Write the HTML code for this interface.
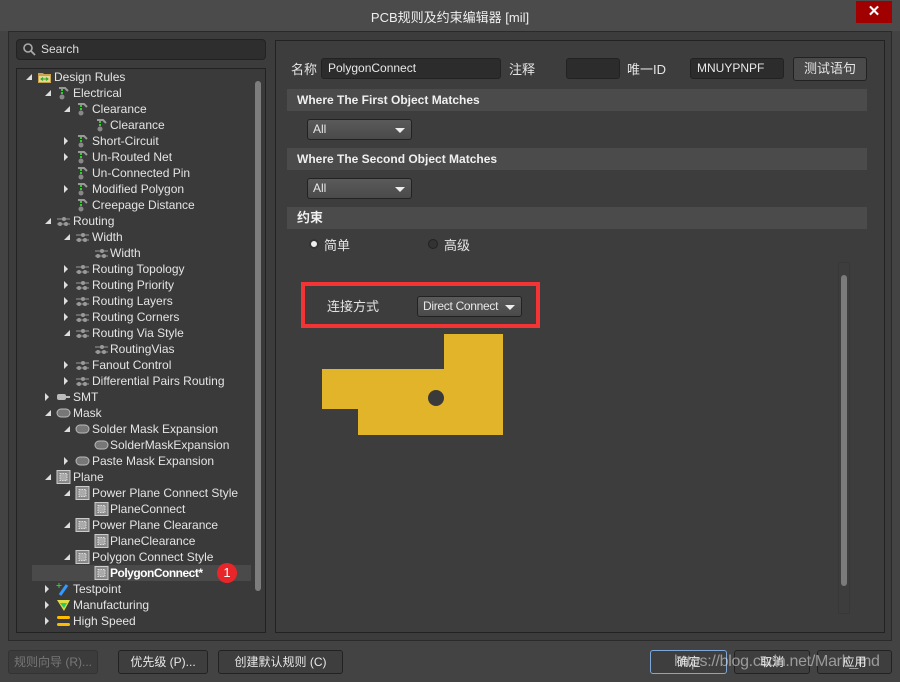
<!DOCTYPE html>
<html><head><meta charset="utf-8">
<style>
*{box-sizing:border-box;margin:0;padding:0}
body{width:900px;height:682px;background:#434343;font-family:"Liberation Sans","Noto Sans CJK SC",sans-serif;font-size:12px;color:#e4e4e4;position:relative;overflow:hidden}
.a{position:absolute}
.row{position:absolute;height:16px;line-height:16px;white-space:nowrap}
.row span{position:absolute;left:0;top:0}
.ic{position:absolute;top:1px;width:15px;height:14px}
.exp{position:absolute;top:5px;width:0;height:0;border-left:6px solid transparent;border-bottom:6px solid #ddd}
.col{position:absolute;top:4px;width:0;height:0;border-top:4px solid transparent;border-bottom:4px solid transparent;border-left:4px solid #ddd}
.inp{position:absolute;background:#2c2c2c;border:1px solid #222;border-radius:3px;height:21px;line-height:19px;padding-left:6px;color:#e8e8e8}
.band{position:absolute;left:287px;width:580px;height:22px;background:#4b4b4b;line-height:22px;padding-left:10px;font-weight:bold;color:#f0f0f0}
.dd{position:absolute;background:linear-gradient(#5a5a5a,#4a4a4a);border:1px solid #222;border-radius:3px;height:21px;line-height:19px;padding-left:5px;color:#e8e8e8}
.dd:after{content:"";position:absolute;right:6px;top:8px;border-left:5px solid transparent;border-right:5px solid transparent;border-top:5px solid #eee}
.btn{position:absolute;top:650px;height:24px;border:1px solid #222;border-radius:3px;background:#3e3e3e;line-height:22px;text-align:center;color:#e8e8e8;font-size:12px}
</style></head><body>
<div class="a" style="left:0;top:0;width:900px;height:31px;background:#4b4b4b"></div>
<div class="a" style="left:0;top:7px;width:900px;text-align:center;font-size:13px;color:#eee">PCB规则及约束编辑器 [mil]</div>
<div class="a" style="left:856px;top:1px;width:36px;height:22px;background:#a00000;color:#fff;text-align:center;font-weight:bold;font-size:15px;line-height:22px">✕</div>
<div class="a" style="left:8px;top:31px;width:884px;height:610px;background:#3c3c3c;border:1px solid #2a2a2a"></div>
<div class="a" style="left:16px;top:39px;width:250px;height:21px;background:#2e2e2e;border:1px solid #222;border-radius:4px"></div>
<svg class="a" style="left:22px;top:42px" width="14" height="14"><circle cx="6" cy="6" r="4" stroke="#aaa" stroke-width="1.6" fill="none"/><line x1="9" y1="9" x2="13" y2="13" stroke="#aaa" stroke-width="1.8"/></svg>
<div class="a" style="left:41px;top:42px;color:#ddd">Search</div>
<div class="a" style="left:16px;top:68px;width:250px;height:565px;background:#3a3a3a;border:1px solid #222"></div>
<div class="a" style="left:255px;top:81px;width:6px;height:510px;background:#7d7d7d;border-radius:3px"></div>
<div class="a" style="left:32px;top:565px;width:219px;height:16px;background:#4a4a4a"></div>

<svg width="0" height="0" style="position:absolute">
<defs>
<symbol id="el" viewBox="0 0 15 14"><path d="M3 2 H9 L12 5" stroke="#999" stroke-width="2" fill="none"/><circle cx="6" cy="11" r="2.5" fill="#888"/><rect x="5" y="3" width="2" height="2" fill="#3c3"/><rect x="5" y="6" width="2" height="2" fill="#3c3"/></symbol>
<symbol id="rt" viewBox="0 0 15 14"><line x1="1" y1="5" x2="14" y2="5" stroke="#999"/><line x1="1" y1="10" x2="14" y2="10" stroke="#999"/><circle cx="8" cy="5" r="2" fill="#999"/><circle cx="4" cy="10" r="2" fill="#999"/><circle cx="10" cy="10" r="2" fill="#999"/></symbol>
<symbol id="mk" viewBox="0 0 15 14"><rect x="1" y="3" width="13" height="8" rx="4" fill="#777" stroke="#bbb"/></symbol>
<symbol id="pl" viewBox="0 0 15 14"><rect x="1" y="0.5" width="13" height="13" fill="#888" stroke="#ccc"/><rect x="4" y="3.5" width="7" height="7" fill="#aaa" stroke="#ddd" stroke-dasharray="1.5 1"/></symbol>
<symbol id="dr" viewBox="0 0 15 14"><path d="M1 3 H6 L7 4 H14 V13 H1Z" fill="#c8a54a"/><rect x="2" y="6" width="11" height="6" fill="#e8d79a"/><path d="M4 9 H11 M6 7.5 L4 9 L6 10.5 M9 7.5 L11 9 L9 10.5" stroke="#2a2" fill="none"/></symbol>
<symbol id="smt" viewBox="0 0 15 14"><rect x="1" y="4" width="9" height="6" rx="2" fill="#bbb"/><path d="M10 7 H14" stroke="#bbb" stroke-width="2"/></symbol>
<symbol id="tp" viewBox="0 0 15 14"><path d="M4 13 L11 3" stroke="#39f" stroke-width="3"/><path d="M3 1 V6 M0.5 3.5 H5.5" stroke="#3c3"/></symbol>
<symbol id="mf" viewBox="0 0 15 14"><path d="M1 2 H14 L8 13 Z" fill="#dd4"/><path d="M4 5 H11 L8 10Z" fill="#2c6"/></symbol>
<symbol id="hs" viewBox="0 0 15 14"><rect x="1" y="2" width="13" height="3" rx="1.5" fill="#fb0"/><rect x="1" y="9" width="13" height="3" rx="1.5" fill="#fb0"/></symbol>
</defs></svg>

<div class="row" style="top:69px;left:0"><i class="exp" style="left:26px"></i><svg class="ic" style="left:37px"><use href="#dr"/></svg><span style="left:54px">Design Rules</span></div>
<div class="row" style="top:85px;left:0"><i class="exp" style="left:45px"></i><svg class="ic" style="left:56px"><use href="#el"/></svg><span style="left:73px">Electrical</span></div>
<div class="row" style="top:101px;left:0"><i class="exp" style="left:64px"></i><svg class="ic" style="left:75px"><use href="#el"/></svg><span style="left:92px">Clearance</span></div>
<div class="row" style="top:117px;left:0"><svg class="ic" style="left:94px"><use href="#el"/></svg><span style="left:110px">Clearance</span></div>
<div class="row" style="top:133px;left:0"><i class="col" style="left:64px"></i><svg class="ic" style="left:75px"><use href="#el"/></svg><span style="left:92px">Short-Circuit</span></div>
<div class="row" style="top:149px;left:0"><i class="col" style="left:64px"></i><svg class="ic" style="left:75px"><use href="#el"/></svg><span style="left:92px">Un-Routed Net</span></div>
<div class="row" style="top:165px;left:0"><svg class="ic" style="left:75px"><use href="#el"/></svg><span style="left:92px">Un-Connected Pin</span></div>
<div class="row" style="top:181px;left:0"><i class="col" style="left:64px"></i><svg class="ic" style="left:75px"><use href="#el"/></svg><span style="left:92px">Modified Polygon</span></div>
<div class="row" style="top:197px;left:0"><svg class="ic" style="left:75px"><use href="#el"/></svg><span style="left:92px">Creepage Distance</span></div>
<div class="row" style="top:213px;left:0"><i class="exp" style="left:45px"></i><svg class="ic" style="left:56px"><use href="#rt"/></svg><span style="left:73px">Routing</span></div>
<div class="row" style="top:229px;left:0"><i class="exp" style="left:64px"></i><svg class="ic" style="left:75px"><use href="#rt"/></svg><span style="left:92px">Width</span></div>
<div class="row" style="top:245px;left:0"><svg class="ic" style="left:94px"><use href="#rt"/></svg><span style="left:110px">Width</span></div>
<div class="row" style="top:261px;left:0"><i class="col" style="left:64px"></i><svg class="ic" style="left:75px"><use href="#rt"/></svg><span style="left:92px">Routing Topology</span></div>
<div class="row" style="top:277px;left:0"><i class="col" style="left:64px"></i><svg class="ic" style="left:75px"><use href="#rt"/></svg><span style="left:92px">Routing Priority</span></div>
<div class="row" style="top:293px;left:0"><i class="col" style="left:64px"></i><svg class="ic" style="left:75px"><use href="#rt"/></svg><span style="left:92px">Routing Layers</span></div>
<div class="row" style="top:309px;left:0"><i class="col" style="left:64px"></i><svg class="ic" style="left:75px"><use href="#rt"/></svg><span style="left:92px">Routing Corners</span></div>
<div class="row" style="top:325px;left:0"><i class="exp" style="left:64px"></i><svg class="ic" style="left:75px"><use href="#rt"/></svg><span style="left:92px">Routing Via Style</span></div>
<div class="row" style="top:341px;left:0"><svg class="ic" style="left:94px"><use href="#rt"/></svg><span style="left:110px">RoutingVias</span></div>
<div class="row" style="top:357px;left:0"><i class="col" style="left:64px"></i><svg class="ic" style="left:75px"><use href="#rt"/></svg><span style="left:92px">Fanout Control</span></div>
<div class="row" style="top:373px;left:0"><i class="col" style="left:64px"></i><svg class="ic" style="left:75px"><use href="#rt"/></svg><span style="left:92px">Differential Pairs Routing</span></div>
<div class="row" style="top:389px;left:0"><i class="col" style="left:45px"></i><svg class="ic" style="left:56px"><use href="#smt"/></svg><span style="left:73px">SMT</span></div>
<div class="row" style="top:405px;left:0"><i class="exp" style="left:45px"></i><svg class="ic" style="left:56px"><use href="#mk"/></svg><span style="left:73px">Mask</span></div>
<div class="row" style="top:421px;left:0"><i class="exp" style="left:64px"></i><svg class="ic" style="left:75px"><use href="#mk"/></svg><span style="left:92px">Solder Mask Expansion</span></div>
<div class="row" style="top:437px;left:0"><svg class="ic" style="left:94px"><use href="#mk"/></svg><span style="left:110px">SolderMaskExpansion</span></div>
<div class="row" style="top:453px;left:0"><i class="col" style="left:64px"></i><svg class="ic" style="left:75px"><use href="#mk"/></svg><span style="left:92px">Paste Mask Expansion</span></div>
<div class="row" style="top:469px;left:0"><i class="exp" style="left:45px"></i><svg class="ic" style="left:56px"><use href="#pl"/></svg><span style="left:73px">Plane</span></div>
<div class="row" style="top:485px;left:0"><i class="exp" style="left:64px"></i><svg class="ic" style="left:75px"><use href="#pl"/></svg><span style="left:92px">Power Plane Connect Style</span></div>
<div class="row" style="top:501px;left:0"><svg class="ic" style="left:94px"><use href="#pl"/></svg><span style="left:110px">PlaneConnect</span></div>
<div class="row" style="top:517px;left:0"><i class="exp" style="left:64px"></i><svg class="ic" style="left:75px"><use href="#pl"/></svg><span style="left:92px">Power Plane Clearance</span></div>
<div class="row" style="top:533px;left:0"><svg class="ic" style="left:94px"><use href="#pl"/></svg><span style="left:110px">PlaneClearance</span></div>
<div class="row" style="top:549px;left:0"><i class="exp" style="left:64px"></i><svg class="ic" style="left:75px"><use href="#pl"/></svg><span style="left:92px">Polygon Connect Style</span></div>
<div class="row" style="top:565px;left:0"><svg class="ic" style="left:94px"><use href="#pl"/></svg><span style="left:110px;font-weight:bold;color:#fff;letter-spacing:-0.5px">PolygonConnect*</span></div>
<div class="a" style="left:217px;top:563px;width:20px;height:20px;border-radius:50%;background:#e8262a;color:#fff;text-align:center;line-height:20px;font-size:13px">1</div>
<div class="row" style="top:581px;left:0"><i class="col" style="left:45px"></i><svg class="ic" style="left:56px"><use href="#tp"/></svg><span style="left:73px">Testpoint</span></div>
<div class="row" style="top:597px;left:0"><i class="col" style="left:45px"></i><svg class="ic" style="left:56px"><use href="#mf"/></svg><span style="left:73px">Manufacturing</span></div>
<div class="row" style="top:613px;left:0"><i class="col" style="left:45px"></i><svg class="ic" style="left:56px"><use href="#hs"/></svg><span style="left:73px">High Speed</span></div>

<div class="a" style="left:275px;top:40px;width:610px;height:593px;background:#3d3d3d;border:1px solid #222"></div>
<div class="a" style="left:291px;top:59px;font-size:13px">名称</div>
<div class="inp" style="left:321px;top:58px;width:180px">PolygonConnect</div>
<div class="a" style="left:509px;top:59px;font-size:13px">注释</div>
<div class="inp" style="left:566px;top:58px;width:54px"></div>
<div class="a" style="left:627px;top:59px;font-size:13px">唯一ID</div>
<div class="inp" style="left:690px;top:58px;width:94px">MNUYPNPF</div>
<div class="a" style="left:793px;top:57px;width:74px;height:24px;background:#4a4a4a;border:1px solid #222;border-radius:3px;text-align:center;line-height:22px;font-size:13px">测试语句</div>
<div class="band" style="top:89px">Where The First Object Matches</div>
<div class="dd" style="left:307px;top:119px;width:105px">All</div>
<div class="band" style="top:148px">Where The Second Object Matches</div>
<div class="dd" style="left:307px;top:178px;width:105px">All</div>
<div class="band" style="top:207px;font-size:13px">约束</div>
<div class="a" style="left:309px;top:239px;width:10px;height:10px;border-radius:50%;background:#eee;border:2px solid #333"></div>
<div class="a" style="left:324px;top:235px;font-size:13px">简单</div>
<div class="a" style="left:428px;top:239px;width:10px;height:10px;border-radius:50%;background:#333;border:1px solid #222"></div>
<div class="a" style="left:444px;top:235px;font-size:13px">高级</div>
<div class="a" style="left:838px;top:262px;width:12px;height:352px;border:1px solid #383838"></div>
<div class="a" style="left:841px;top:275px;width:6px;height:311px;background:#7b7b7b;border-radius:3px"></div>
<div class="a" style="left:301px;top:282px;width:239px;height:46px;border:4px solid #f23434"></div>
<div class="a" style="left:327px;top:296px;font-size:13px">连接方式</div>
<div class="dd" style="left:417px;top:296px;width:105px;letter-spacing:-0.3px">Direct Connect</div>
<svg class="a" style="left:0;top:0" width="900" height="682"><polygon points="322,369 444,369 444,334 503,334 503,435 358,435 358,409 322,409" fill="#e2b429"/><circle cx="436" cy="398" r="8" fill="#3a3a3a"/></svg>
<div class="btn" style="left:8px;width:90px;color:#777;background:#3c3c3c;border-color:#333">规则向导 (R)...</div>
<div class="btn" style="left:118px;width:90px">优先级 (P)...</div>
<div class="btn" style="left:218px;width:125px">创建默认规则 (C)</div>
<div class="btn" style="left:650px;width:77px;border-color:#7ea7d8">确定</div>
<div class="btn" style="left:734px;width:76px">取消</div>
<div class="btn" style="left:817px;width:75px">应用</div>
<div class="a" style="left:674px;top:653px;font-size:16px;letter-spacing:-0.3px;color:rgba(230,230,230,0.55)">https://blog.csdn.net/Mark_md</div>
</body></html>
